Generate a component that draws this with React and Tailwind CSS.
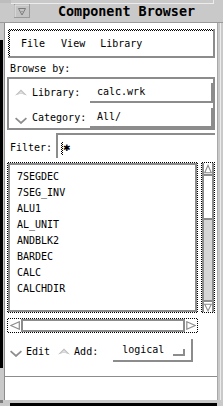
import React from "react";

const CK =
  "bg-[conic-gradient(#000_25%,#fff_0_50%,#000_0_75%,#fff_0)] bg-[length:2px_2px]";

function UpChev() {
  return (
    <svg width="12" height="7" viewBox="0 0 12 7" className="block">
      <path d="M0 6.5 L6 0.5 L12 6.5 L6 4.5 Z" fill="#bcbcbc" />
      <path d="M2.6 5.4 L6 2 L9.4 5.4 L6 4.1 Z" fill="#e2e2e2" />
    </svg>
  );
}

function DownChev() {
  return (
    <svg width="12" height="7" viewBox="0 0 12 7" className="block">
      <path d="M0.6 1.2 L6 6 L11.4 1.2" fill="none" stroke="#8c8c8c" strokeWidth="1.7" />
    </svg>
  );
}

const items = ["7SEGDEC", "7SEG_INV", "ALU1", "AL_UNIT", "ANDBLK2", "BARDEC", "CALC", "CALCHDIR"];

export default function App() {
  return (
    <div className="w-[223px] h-[406px] overflow-hidden bg-[#c9c9c9] flex flex-col font-['DejaVu_Sans_Mono',monospace] text-[10px] leading-none text-black">
      {/* title bar */}
      <div className="h-[22px] flex flex-col">
        <div className="h-[3px] flex">
          <div className="w-[11px] bg-[#bdbdbd]" />
          <div className="flex-1" />
          <div className="w-px bg-[#ececec]" />
          <div className="w-[9px]" />
        </div>
        <div className="h-px ml-[11px] mr-[9px] bg-[#ececec]" />
        <div className="flex-1 flex items-start">
          <div className="ml-[14px]">
            <svg width="16" height="14" viewBox="0 0 16 14" className="block">
              <rect x="0.5" y="0.5" width="15" height="13" fill="#c4c4c4" stroke="#9a9a9a" />
              <path d="M1 13 L1 1 L15 1" fill="none" stroke="#e6e6e6" />
              <path d="M4.5 4.5 L11.5 4.5 L8 11 Z" fill="none" stroke="#7a7a7a" />
              <rect x="7.5" y="7" width="1" height="1" fill="#7a7a7a" />
            </svg>
          </div>
          <div className="flex-1 text-center font-bold text-[13.4px] leading-none mt-[1px]">
            Component Browser
          </div>
        </div>
      </div>
      <div className="h-px bg-[#9a9a9a]" />

      {/* body */}
      <div className="h-[377px] flex">
        <div className="w-[5px] flex">
          <div className="w-[4px] flex flex-col">
            <div className="h-[17px]" />
            <div className="h-[328px] w-[3px] bg-black" />
          </div>
          <div className="w-px bg-[#8c8c8c]" />
        </div>

        <div className="flex-1 bg-white flex flex-col">
          {/* menu bar */}
          <div className={`mt-[6px] ml-[3px] mr-[2px] h-[29px] pt-[2px] pl-[2px] border-r-2 border-b-2 border-[#8c8c8c] ${CK}`}>
            <div className="h-full bg-white flex items-center pl-[11px] gap-[16px]">
              <span>File</span>
              <span>View</span>
              <span className="-ml-px">Library</span>
            </div>
          </div>

          <div className="mt-[6px] pl-[5px] h-[10px]">Browse by:</div>

          {/* browse box */}
          <div className="mt-[3px] ml-[2px] mr-[2px] h-[53px] border-2 border-[#8c8c8c] flex flex-col pt-[4px] gap-[5px]">
            <div className="h-[20px] flex items-center">
              <div className="ml-[6px] w-[12px] -mt-[2px]">
                <UpChev />
              </div>
              <div className="ml-[5px] w-[53px]">Library:</div>
              <div className="ml-[5px] flex-1 h-full border-r-2 border-b-2 border-[#8c8c8c] flex items-center pl-[7px]">
                calc.wrk
              </div>
            </div>
            <div className="h-[20px] flex items-center">
              <div className="ml-[6px] w-[12px] mt-[4px]">
                <DownChev />
              </div>
              <div className="ml-[5px] w-[53px]">Category:</div>
              <div className="ml-[5px] flex-1 h-full border-r-2 border-b-2 border-[#8c8c8c] flex items-center pl-[7px]">
                All/
              </div>
            </div>
          </div>

          {/* filter */}
          <div className="mt-[3px] h-[25px] flex">
            <div className="pl-[5px] w-[47px] pt-[10px]">Filter:</div>
            <div className="ml-[4px] mr-[2px] flex-1 border-l-2 border-t-2 border-[#8c8c8c] flex items-start pt-[7px] pl-[3px]">
              <div className={`w-[2px] h-[13px] ${CK}`} />
              <span className="font-['DejaVu_Sans',sans-serif] text-[9px] font-bold leading-none mt-[2px]">✱</span>
            </div>
          </div>

          {/* list + vscroll */}
          <div className="mt-[4px] h-[151px] flex">
            <div className={`ml-[2px] w-[191px] p-px ${CK}`}>
              <div className="h-full bg-white border-2 border-[#8c8c8c] pt-[4px] pl-[7px] flex flex-col">
                {items.map((it) => (
                  <div key={it} className="h-[16px] flex items-center">
                    {it}
                  </div>
                ))}
              </div>
            </div>
            <div className={`ml-[3px] w-[14px] p-px ${CK}`}>
              <div className="h-full bg-white border-x-2 border-[#8c8c8c] flex flex-col">
                <div className="h-[11px] flex items-center justify-center">
                  <svg width="9" height="10" viewBox="0 0 9 10" className="block">
                    <path d="M0.8 9.3 L4.5 0.8 L8.2 9.3 Z" fill="none" stroke="#8c8c8c" strokeWidth="1.2" />
                  </svg>
                </div>
                <div className="h-[46px] border-y-2 border-[#8c8c8c] bg-white" />
                <div className="flex-1 bg-[#d6d6d6]" />
                <div className="h-[12px] border-t-2 border-[#8c8c8c] flex items-center justify-center">
                  <svg width="9" height="9" viewBox="0 0 9 9" className="block">
                    <path d="M0.8 0.8 L8.2 0.8 L4.5 8.3 Z" fill="none" stroke="#8c8c8c" strokeWidth="1.2" />
                  </svg>
                </div>
              </div>
            </div>
          </div>

          {/* hscroll */}
          <div className={`mt-[5px] ml-[2px] w-[191px] h-[15px] p-px ${CK}`}>
            <div className="h-full bg-white flex">
              <div className="w-[13px] flex items-center justify-center">
                <svg width="10" height="9" viewBox="0 0 10 9" className="block">
                  <path d="M9.3 0.8 L0.8 4.5 L9.3 8.2 Z" fill="none" stroke="#8c8c8c" strokeWidth="1.2" />
                </svg>
              </div>
              <div className="flex-1 border-2 border-[#8c8c8c] bg-white" />
              <div className="w-[12px] flex items-center justify-center">
                <svg width="10" height="9" viewBox="0 0 10 9" className="block">
                  <path d="M0.8 0.8 L9.3 4.5 L0.8 8.2 Z" fill="none" stroke="#8c8c8c" strokeWidth="1.2" />
                </svg>
              </div>
            </div>
          </div>

          {/* bottom controls */}
          <div className="mt-[6px] h-[23px] flex items-center">
            <div className="ml-[5px] w-[12px] mt-[6px]">
              <DownChev />
            </div>
            <div className="ml-[4px] mt-[3px]">Edit</div>
            <div className="ml-[8px] w-[12px] mt-[1px]">
              <UpChev />
            </div>
            <div className="ml-[4px] mt-[3px]">Add:</div>
            <div className="ml-[15px] w-[80px] h-full border-r-2 border-b-2 border-[#8c8c8c] flex items-center pl-[9px]">
              <span className="mt-[1px]">logical</span>
              <div className="ml-[9px] mt-[5px] w-[12px] h-[7px] border-r-2 border-b-2 border-[#8c8c8c]" />
            </div>
          </div>

          <div className="mt-[14px] h-px bg-[#8c8c8c]" />
          <div className="flex-1" />
        </div>

        <div className="w-[6px] flex">
          <div className="w-px bg-[#a8a8a8]" />
          <div className="w-[2px]" />
          <div className="w-px bg-[#ececec]" />
        </div>
      </div>

      {/* bottom frame */}
      <div className="h-[3px] flex">
        <div className="w-[3px] bg-[#7a7a7a]" />
        <div className="flex-1" />
      </div>
      <div className="h-[3px] flex">
        <div className="w-[10px]" />
        <div className="flex-1 bg-black" />
        <div className="w-[6px]" />
      </div>
    </div>
  );
}
